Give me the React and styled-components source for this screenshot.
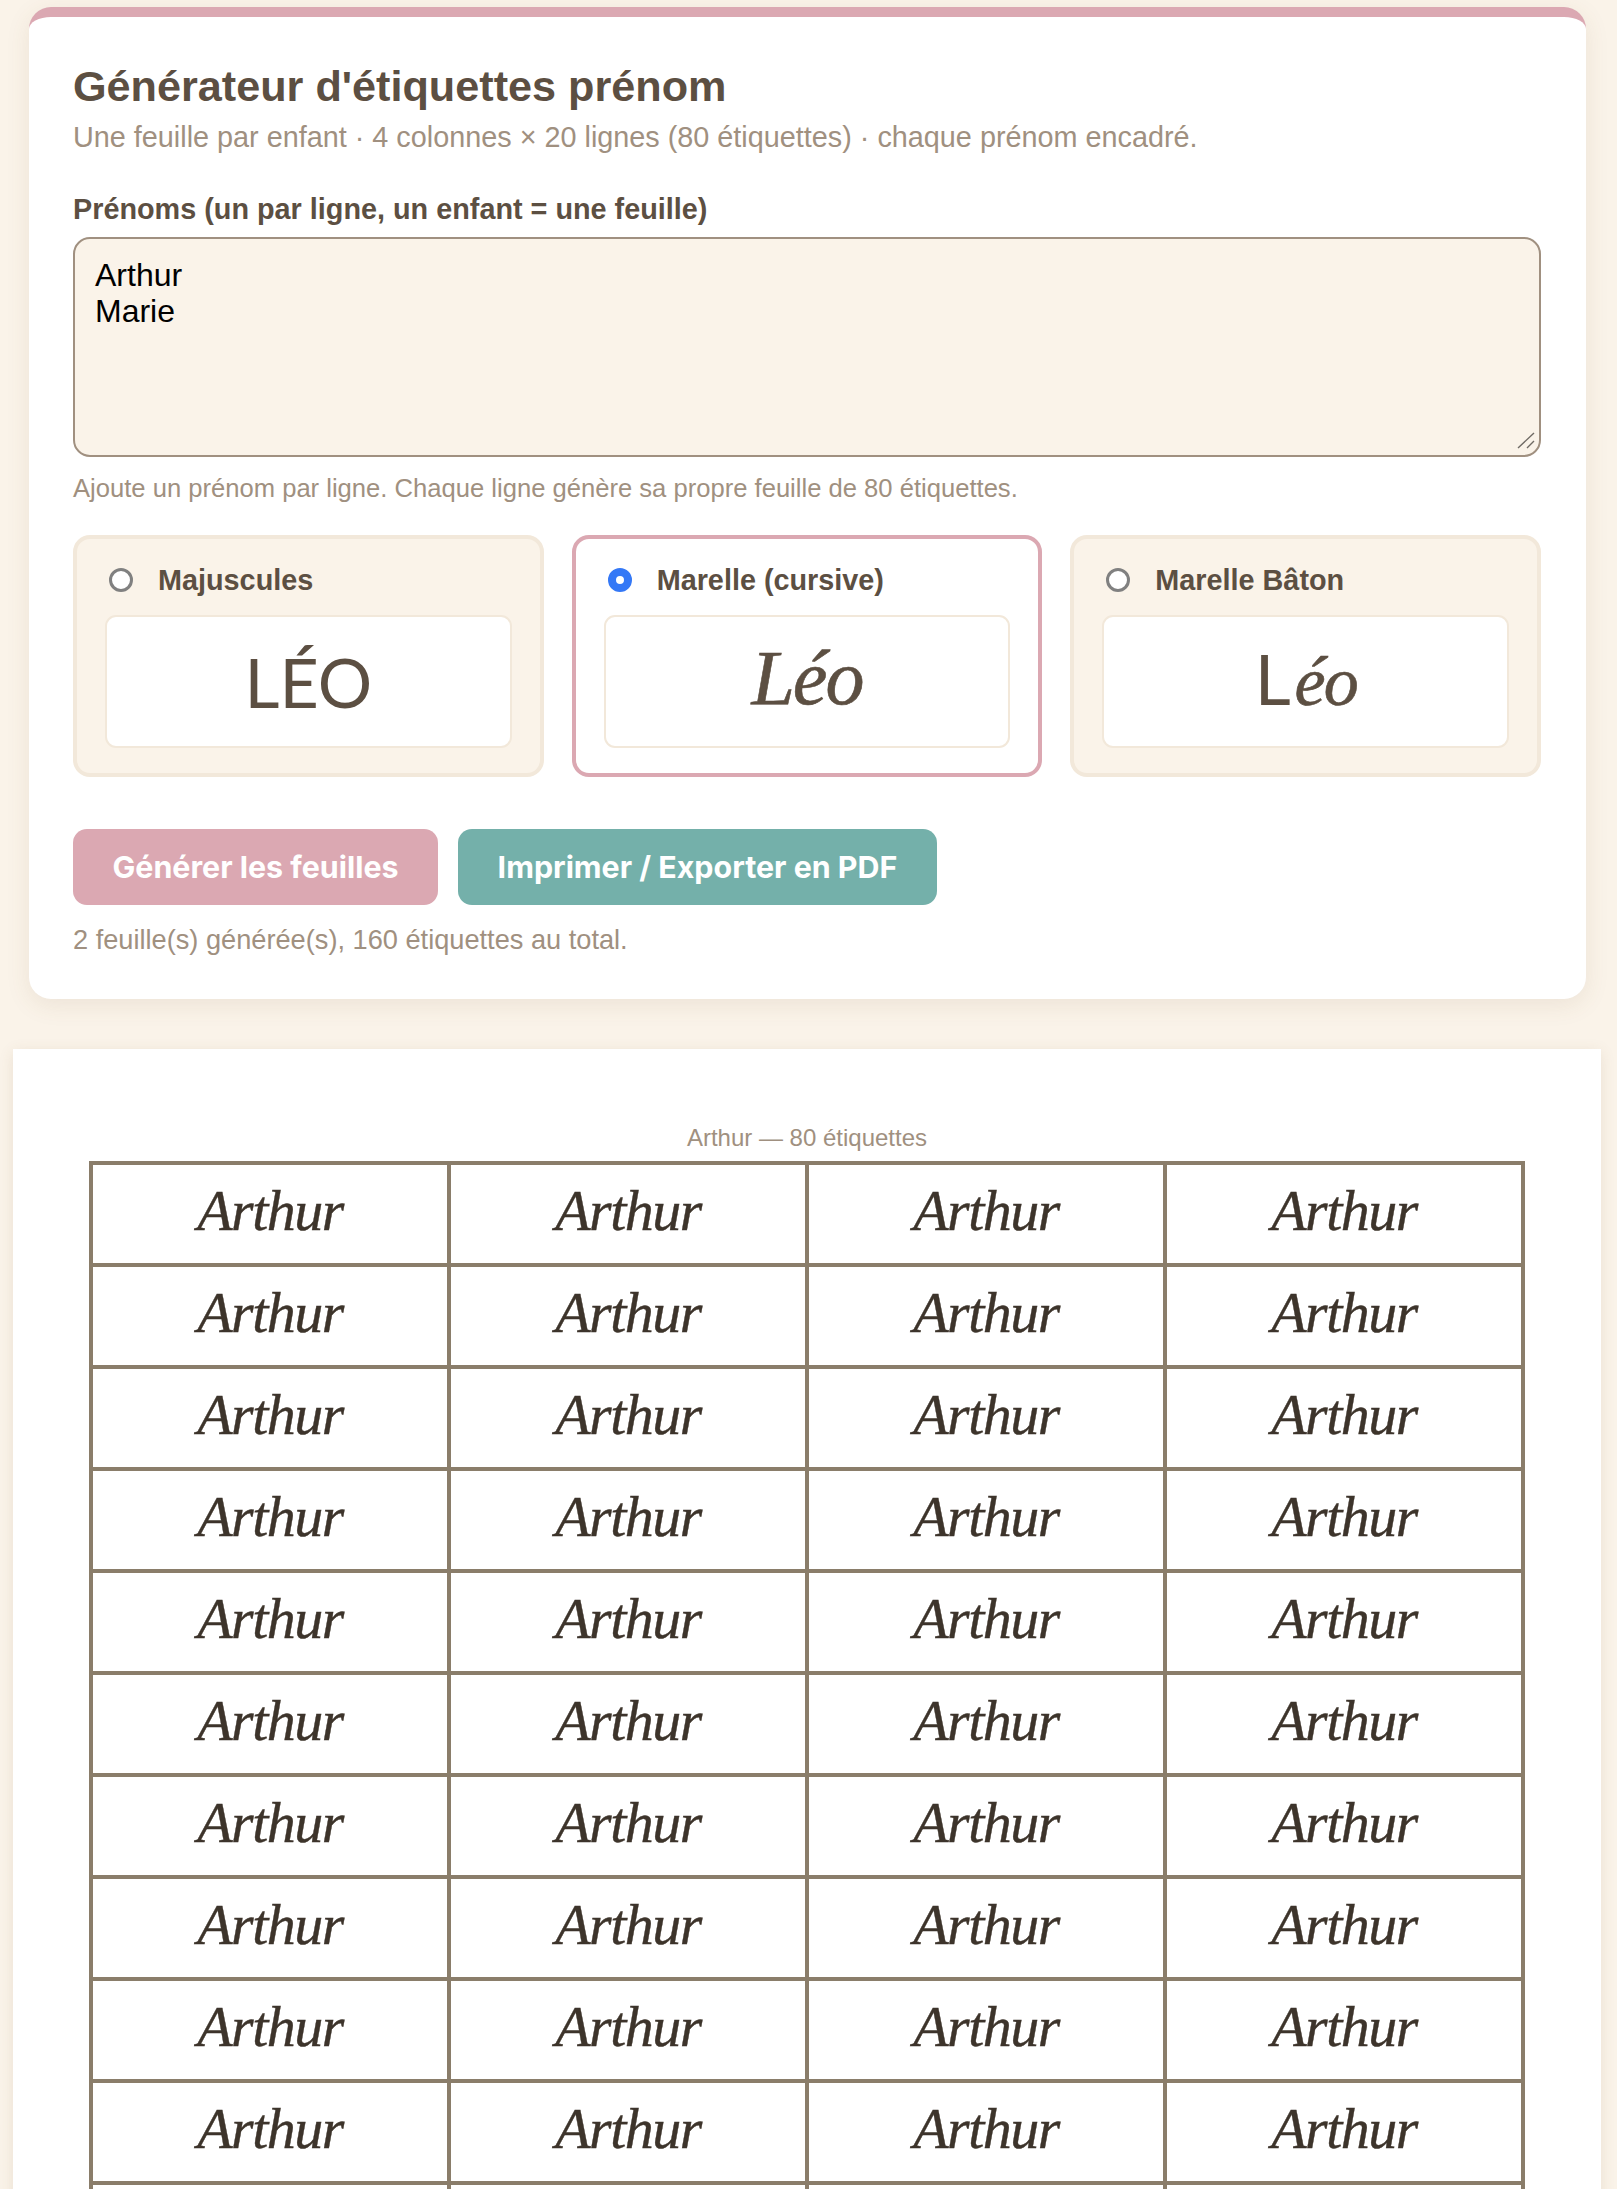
import React from 'react';
import styled, { createGlobalStyle } from 'styled-components';

const Global = createGlobalStyle`
  html, body { margin: 0; height: 2189px; overflow: hidden; background: #faf3e9; }
  * { box-sizing: border-box; }
`;
const Page = styled.div`
  display: flex; flex-direction: column; align-items: flex-start;
  padding-top: 7px; font-family: "Liberation Sans", Arial, sans-serif; color: #5c4f42;
`;
const Card = styled.section`
  width: 1557px; margin-left: 29px; background: #fff; border-top: 10px solid #dba8b2; border-radius: 22px;
  padding: 44px 45px 43px 44px; box-shadow: 0 6px 24px rgba(120, 90, 50, 0.1);
`;
const Title = styled.h1`margin: 0; font-size: 43.2px; line-height: 50px; font-weight: 700;`;
const Sub = styled.p`margin: 9px 0 0; font-size: 28.8px; line-height: 34px; color: #a09080;`;
const FieldLabel = styled.label`display: block; margin-top: 38px; font-size: 28.8px; line-height: 34px; font-weight: 700;`;
const NamesBox = styled.div`position: relative; margin-top: 11px;`;
const Names = styled.textarea`
  display: block; width: 100%; height: 220px; padding: 18px 20px; resize: none;
  border: 2px solid #a09080; border-radius: 17px; background: #faf3e9; color: #000;
  font-family: "Liberation Sans", Arial, sans-serif; font-size: 32px; line-height: 36px; outline: none;
`;
const Grip = styled.svg`position: absolute; right: 6px; bottom: 8px; width: 18px; height: 17px;`;
const Help = styled.p`margin: 15px 0 0; font-size: 25.6px; line-height: 32px; color: #a09080;`;
const Options = styled.div`display: grid; grid-template-columns: repeat(3, 1fr); gap: 28px; margin-top: 31px;`;
const Option = styled.label`
  display: block; height: 242px; padding: 21px 28px 25px; border-radius: 17px;
  border: 4px solid ${p => (p.$on ? '#dba8b2' : '#f2e8da')};
  background: ${p => (p.$on ? '#fff' : '#faf3e9')};
`;
const OptionHead = styled.div`display: flex; align-items: center; gap: 25px; height: 40px; padding-left: 4px; font-size: 28.8px; font-weight: 700;`;
const Radio = styled.input`
  appearance: none; flex: none; width: 24px; height: 24px; margin: 0; border-radius: 50%;
  border: 3px solid #808080; background: #fff;
  &:checked { border: 8.5px solid #3478f6; }
`;
const Preview = styled.div`
  display: flex; align-items: baseline; justify-content: center; height: 133px; margin-top: 15px;
  padding-top: ${p => p.$top}px;
  background: #fff; border: 2px solid #f2e8da; border-radius: 11px; color: #5c4f42;
  font-size: ${p => p.$size}px; line-height: 1;
  font-family: ${p => (p.$plain ? '"Lato", sans-serif' : '"Liberation Serif", serif')};
  font-style: ${p => (p.$plain ? 'normal' : 'italic')};
  letter-spacing: ${p => (p.$plain ? 0 : -2)}px;
  -webkit-text-stroke: ${p => (p.$plain ? 0 : 0.6)}px #5c4f42;
`;
const Upright = styled.span`
  font-family: "Lato", sans-serif; font-style: normal; font-size: 70px; margin-right: 6px; -webkit-text-stroke: 0;
`;
const Actions = styled.div`display: flex; gap: 20px; margin-top: 52px;`;
const Button = styled.button`
  height: 76px; padding: 0 39.5px; border: 0; border-radius: 14px; color: #fff;
  background: ${p => p.$bg}; font-family: "Inter", sans-serif; font-size: 30.4px; font-weight: 700;
`;
const Status = styled.p`margin: 19px 0 0; font-size: 27.2px; line-height: 32px; color: #a09080;`;
const Sheet = styled.section`
  width: 1588px; margin: 50px 0 0 13px; padding: 76px; background: #fff;
  box-shadow: 0 3px 14px rgba(120, 90, 50, 0.12);
`;
const Caption = styled.div`height: 36px; font-size: 24px; line-height: 26px; text-align: center; color: #a09080;`;
const Grid = styled.div`
  display: grid; grid-template-columns: repeat(4, 358px); grid-auto-rows: 102px; width: 1436px;
  border-left: 4px solid #8a7d6a; border-top: 4px solid #8a7d6a;
`;
const Cell = styled.div`
  display: flex; align-items: center; justify-content: center; padding-bottom: 8px;
  border-right: 4px solid #8a7d6a; border-bottom: 4px solid #8a7d6a;
  font-family: "Liberation Serif", serif; font-style: italic; font-size: 58px; letter-spacing: -1.5px;
  color: #3d342b; -webkit-text-stroke: 0.4px #3d342b;
`;

const sheets = ['Arthur', 'Marie'];
const cells = Array.from({ length: 80 }, (_, i) => i);
const options = [
  { name: 'Majuscules', sample: 'LÉO', plain: true, size: 68, top: 31 },
  { name: 'Marelle (cursive)', sample: 'Léo', on: true, size: 78, top: 22 },
  { name: 'Marelle Bâton', sample: <><Upright>L</Upright>éo</>, size: 70, top: 26 },
];

export default function App() {
  return (
    <Page>
      <Global />
      <Card>
        <Title>Générateur d'étiquettes prénom</Title>
        <Sub>Une feuille par enfant · 4 colonnes × 20 lignes (80 étiquettes) · chaque prénom encadré.</Sub>
        <FieldLabel htmlFor="names">Prénoms (un par ligne, un enfant = une feuille)</FieldLabel>
        <NamesBox>
          <Names id="names" defaultValue={'Arthur\nMarie'} />
          <Grip viewBox="0 0 18 17" fill="none" stroke="#6f6a64" strokeWidth="1.4">
            <path d="M1 16 17 1M10 16 17 9" />
          </Grip>
        </NamesBox>
        <Help>Ajoute un prénom par ligne. Chaque ligne génère sa propre feuille de 80 étiquettes.</Help>
        <Options>
          {options.map(o => (
            <Option key={o.name} $on={o.on}>
              <OptionHead>
                <Radio type="radio" name="font" defaultChecked={o.on} />
                {o.name}
              </OptionHead>
              <Preview $plain={o.plain} $size={o.size} $top={o.top}>{o.sample}</Preview>
            </Option>
          ))}
        </Options>
        <Actions>
          <Button $bg="#dba8b2">Générer les feuilles</Button>
          <Button $bg="#74b0aa">Imprimer / Exporter en PDF</Button>
        </Actions>
        <Status>2 feuille(s) générée(s), 160 étiquettes au total.</Status>
      </Card>
      {sheets.map(name => (
        <Sheet key={name}>
          <Caption>{name} — 80 étiquettes</Caption>
          <Grid>{cells.map(i => <Cell key={i}>{name}</Cell>)}</Grid>
        </Sheet>
      ))}
    </Page>
  );
}
